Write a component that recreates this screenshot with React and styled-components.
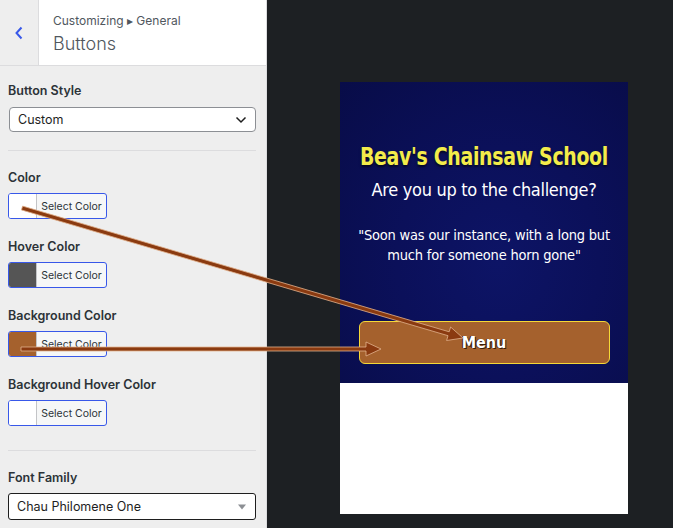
import React from "react";
import styled, { createGlobalStyle } from "styled-components";

const Global = createGlobalStyle`
  html, body { margin: 0; padding: 0; }
  body {
    font-family: Inter, "Liberation Sans", sans-serif;
    background: #1d2023;
    overflow: hidden;
  }
`;

const Page = styled.div`
  position: relative;
  display: flex;
  width: 673px;
  height: 528px;
  overflow: hidden;
`;

const Sidebar = styled.aside`
  width: 266px;
  flex-shrink: 0;
  background: #eeeeee;
  border-right: 1px solid #dcdcde;
  display: flex;
  flex-direction: column;
`;

const Header = styled.div`
  display: flex;
  height: 65px;
  border-bottom: 1px solid #dcdcde;
`;

const BackButton = styled.div`
  width: 38px;
  border-right: 1px solid #dcdcde;
  display: flex;
  align-items: center;
  justify-content: center;
  color: #3858e9;
`;

const Titles = styled.div`
  flex: 1;
  background: #fff;
  padding: 13px 0 0 14px;
  color: #50575e;
`;

const Crumb = styled.div`
  font-size: 12px;
  line-height: 16px;
`;

const Heading = styled.div`
  font-size: 18px;
  font-weight: 300;
  line-height: 26px;
  margin-top: 2px;
`;

const Controls = styled.div`
  padding: 16px 10px 0 8px;
  display: flex;
  flex-direction: column;
`;

const Label = styled.div`
  font-size: 12.5px;
  font-weight: 600;
  color: #2c3338;
  line-height: 18px;
  margin-bottom: ${({ gap }) => gap || 6}px;
`;

const Select = styled.div`
  display: flex;
  align-items: center;
  justify-content: space-between;
  height: ${({ h }) => h}px;
  box-sizing: border-box;
  margin-left: ${({ inset }) => inset || 0}px;
  padding: 0 8px 0 8px;
  background: #fff;
  border: 1px solid ${({ dark }) => (dark ? "#1e1e1e" : "#8c8f94")};
  border-radius: ${({ dark }) => (dark ? 3 : 4)}px;
  font-size: 12.5px;
  color: #1e1e1e;
`;

const Divider = styled.hr`
  border: 0;
  border-top: 1px solid #dcdcde;
  margin: ${({ m }) => m};
`;

const ColorGroup = styled.div`
  margin-bottom: 19px;
`;

const ColorButton = styled.div`
  display: flex;
  width: 99px;
  height: 26px;
  box-sizing: border-box;
  border: 1px solid #3858e9;
  border-radius: 3px;
  overflow: hidden;
  background: #f6f7f7;
`;

const Swatch = styled.span`
  width: 27px;
  background: ${({ color }) => color};
  border-right: 1px solid #c3c4c7;
`;

const SwatchText = styled.span`
  flex: 1;
  display: flex;
  align-items: center;
  justify-content: center;
  font-size: 10.5px;
  color: #2c3338;
`;

const Main = styled.main`
  flex: 1;
  padding: 82px 0 0 73px;
`;

const Card = styled.div`
  width: 288px;
  display: flex;
  flex-direction: column;
`;

const Hero = styled.div`
  height: 301px;
  box-sizing: border-box;
  padding: 59px 18px 0 18px;
  background: radial-gradient(ellipse at 55% 60%, #0d1466 0%, #0b105a 45%, #080c48 100%);
  display: flex;
  flex-direction: column;
  align-items: center;
  text-align: center;
  font-family: "DejaVu Sans Condensed", "DejaVu Sans", sans-serif;
`;

const Title = styled.h1`
  margin: 0;
  font-size: 21px;
  line-height: 32px;
  font-weight: 700;
  white-space: nowrap;
  color: #f3ec4a;
  letter-spacing: -0.3px;
  transform: scaleY(1.2);
  text-shadow: 0 1px 2px rgba(0, 0, 0, 0.6);
`;

const Sub = styled.div`
  margin-top: 5px;
  font-size: 18px;
  line-height: 24px;
  color: #fff;
  letter-spacing: -0.3px;
  white-space: nowrap;
`;

const Quote = styled.p`
  margin: 23px 0 0;
  font-size: 14.5px;
  line-height: 20px;
  color: #fff;
  letter-spacing: -0.2px;
  white-space: nowrap;
`;

const MenuButton = styled.div`
  margin-top: 56px;
  width: 251px;
  height: 43px;
  flex-shrink: 0;
  box-sizing: border-box;
  border: 1px solid #f5d837;
  border-radius: 6px;
  background: #a5612d;
  display: flex;
  align-items: center;
  justify-content: center;
  color: #fff;
  font-weight: 700;
  font-size: 16px;
  text-shadow: 1px 1px 0 #3a1d08, -1px 0 0 #3a1d08;
`;

const Blank = styled.div`
  height: 131px;
  background: #fff;
`;

const Overlay = styled.svg`
  position: absolute;
  left: 0;
  top: 0;
  pointer-events: none;
`;

function arrowPoints(x1, y1, x2, y2) {
  const dx = x2 - x1;
  const dy = y2 - y1;
  const len = Math.hypot(dx, dy);
  const ux = dx / len;
  const uy = dy / len;
  const nx = -uy;
  const ny = ux;
  const s = 2;
  const hw = 7;
  const hl = 15;
  const bx = x2 - ux * hl;
  const by = y2 - uy * hl;
  const p = [
    [x1 + nx * s, y1 + ny * s],
    [bx + nx * s, by + ny * s],
    [bx + nx * hw, by + ny * hw],
    [x2, y2],
    [bx - nx * hw, by - ny * hw],
    [bx - nx * s, by - ny * s],
    [x1 - nx * s, y1 - ny * s],
  ];
  return p.map(([a, b]) => `${a.toFixed(1)},${b.toFixed(1)}`).join(" ");
}

const colors = [
  { label: "Color", swatch: "#ffffff" },
  { label: "Hover Color", swatch: "#555555" },
  { label: "Background Color", swatch: "#a5612d" },
  { label: "Background Hover Color", swatch: "#ffffff" },
];

export default function App() {
  return (
    <Page>
      <Global />
      <Sidebar>
        <Header>
          <BackButton>
            <svg width="10" height="14" viewBox="0 0 10 14">
              <path d="M7.5 1.5 L2.5 7 L7.5 12.5" fill="none" stroke="currentColor" strokeWidth="2" />
            </svg>
          </BackButton>
          <Titles>
            <Crumb>Customizing ▸ General</Crumb>
            <Heading>Buttons</Heading>
          </Titles>
        </Header>
        <Controls>
          <Label gap={7}>Button Style</Label>
          <Select h={25} inset={1}>
            Custom
            <svg width="12" height="8" viewBox="0 0 12 8">
              <path d="M1.5 1.5 L6 6 L10.5 1.5" fill="none" stroke="#1e1e1e" strokeWidth="1.5" />
            </svg>
          </Select>
          <Divider m="18px 0 18px" />
          {colors.map((c) => (
            <ColorGroup key={c.label}>
              <Label>{c.label}</Label>
              <ColorButton>
                <Swatch color={c.swatch} />
                <SwatchText>Select Color</SwatchText>
              </ColorButton>
            </ColorGroup>
          ))}
          <Divider m="5px 0 18px" />
          <Label>Font Family</Label>
          <Select h={27} dark>
            Chau Philomene One
            <svg width="10" height="6" viewBox="0 0 10 6">
              <path d="M1 0.5 L9 0.5 L5 5.5 Z" fill="#8c8f94" />
            </svg>
          </Select>
        </Controls>
      </Sidebar>
      <Main>
        <Card>
          <Hero>
            <Title>Beav's Chainsaw School</Title>
            <Sub>Are you up to the challenge?</Sub>
            <Quote>
              "Soon was our instance, with a long but
              <br />
              much for someone horn gone"
            </Quote>
            <MenuButton>Menu</MenuButton>
          </Hero>
          <Blank />
        </Card>
      </Main>
      <Overlay width="673" height="528">
        <polygon points={arrowPoints(22, 208, 463, 338)} fill="#8a3a10" stroke="#e2b38e" strokeWidth="0.8" />
        <polygon points={arrowPoints(21, 349, 381, 349)} fill="#8a3a10" stroke="#e2b38e" strokeWidth="0.8" />
      </Overlay>
    </Page>
  );
}
